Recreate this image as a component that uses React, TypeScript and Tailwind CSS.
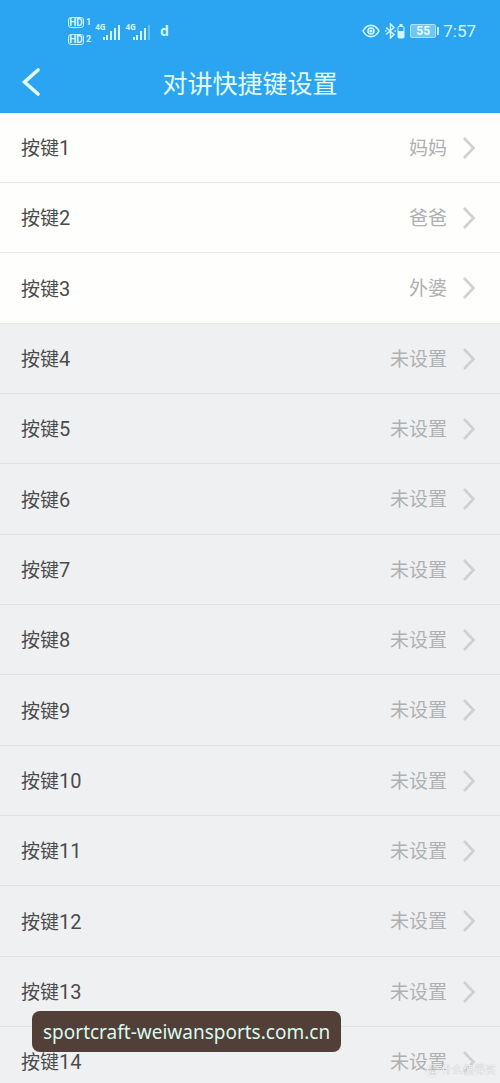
import React from 'react';

interface KeySlot {
  id: number;
  contact?: string;
}

const contacts = ['妈妈', '爸爸', '外婆'];

const slots: KeySlot[] = Array.from({ length: 14 }).map((_, idx) => ({
  id: idx + 1,
  contact: contacts[idx]
}));

function HdBadge({ sim }: { sim: string }) {
  return (
    <div className="flex items-center gap-0.5">
      <span className="flex h-[11px] w-4 items-center justify-center rounded-[3px] border border-[#c4f1fb] text-[10px] leading-none font-bold">
        HD
      </span>
      <span className="text-[9px] leading-none font-bold">{sim}</span>
    </div>
  );
}

function Signal({ weak }: { weak?: boolean }) {
  return (
    <div className="flex">
      <span className="-mr-1 font-['Open_Sans',sans-serif] text-[8px] leading-none font-bold">4G</span>
      <svg className="mt-px h-4 w-[18px]" viewBox="0 0 18 16" fill="currentColor" aria-hidden="true">
        <rect x="1" y="13" width="2" height="3" />
        <rect x="4" y="11" width="2" height="5" />
        <rect x="8" y="7" width="2" height="9" />
        <rect x="12" y="4" width="2" height="12" />
        <rect x="16" y="1" width="2" height="15" opacity={weak ? 0.35 : 1} />
      </svg>
    </div>
  );
}

function StatusBar() {
  return (
    <div className="flex h-[50px] items-center justify-between pt-3 pr-6 pl-[68px] text-[#d3f5fb]">
      <div className="flex items-center">
        <div className="flex flex-col gap-1.5">
          <HdBadge sim="1" />
          <HdBadge sim="2" />
        </div>
        <div className="ml-1 flex gap-1.5">
          <Signal />
          <Signal weak />
        </div>
        <span className="ml-2.5 font-['Noto_Sans',sans-serif] text-sm leading-5 font-bold">d</span>
      </div>
      <div className="flex items-center">
        <svg className="h-3.5 w-[18px]" viewBox="0 0 18 14" fill="none" stroke="currentColor" strokeWidth="1.6" aria-hidden="true">
          <path d="M1 7C3 3.2 5.8 1.4 9 1.4S15 3.2 17 7C15 10.8 12.2 12.6 9 12.6S3 10.8 1 7Z" />
          <circle cx="9" cy="7" r="3" />
          <circle cx="9" cy="7" r="0.8" fill="currentColor" />
        </svg>
        <svg className="ml-1 h-4 w-[22px]" viewBox="0 0 22 16" fill="none" stroke="currentColor" strokeWidth="1.5" aria-hidden="true">
          <path d="M2 4.5L10 11.5L6.5 15V1L10 4.5L2 11.5" />
          <path d="M1 8H2.5M10.5 8H12" />
          <rect x="14" y="3.5" width="6" height="11.5" rx="1" strokeWidth="1" />
          <rect x="15.5" y="1" width="3" height="2" fill="currentColor" stroke="none" />
          <rect x="14" y="8" width="6" height="7" fill="currentColor" stroke="none" />
        </svg>
        <div className="ml-1 flex items-center">
          <span className="flex h-3.5 w-[26px] items-center justify-center rounded-xs border border-[#a9e3fa] bg-[#72c6f6] text-xs leading-none font-bold text-[#e6fbfc]">
            55
          </span>
          <span className="ml-px h-2 w-0.5 bg-[#bcebfb]" />
        </div>
        <span className="ml-1 text-[17px] leading-5">7:57</span>
      </div>
    </div>
  );
}

function KeyRow({ id, contact }: KeySlot) {
  return (
    <li className={`h-[70px] border-b nth-[3n]:h-[71px] ${contact ? 'border-[#e7e9e9] bg-[#fefefc]' : 'border-[#dfe1e2] bg-[#eff0f2]'}`}>
      <button className="flex h-full w-full items-center pr-6 pl-[21px] text-[19px] leading-7">
        <span className="pt-0.5 text-[#4b4b4b]">
          按键<span className="text-xl leading-7">{id}</span>
        </span>
        <span className="ml-auto pt-0.5 text-[#afb0b1]">{contact ?? '未设置'}</span>
        <svg className="ml-4 h-6 w-[13px] text-[#cfd0d0]" viewBox="0 0 13 24" fill="none" stroke="currentColor" strokeWidth="2.6" aria-hidden="true">
          <path d="M1 2L10.5 12L1 22" />
        </svg>
      </button>
    </li>
  );
}

export default function App() {
  return (
    <div className="relative flex h-screen flex-col overflow-hidden bg-[#eff0f2] font-[Roboto,'Noto_Sans_CJK_SC',sans-serif]">
      <header className="shrink-0 bg-[#2ba5f2]">
        <StatusBar />
        <div className="grid h-[63px] grid-cols-[60px_1fr_60px] items-center text-[#e2fbfb]">
          <button className="flex h-full items-center pl-[21px]" aria-label="返回">
            <svg className="h-[30px] w-5" viewBox="0 0 20 30" fill="none" stroke="currentColor" strokeWidth="3.6" strokeLinecap="round" aria-hidden="true">
              <path d="M17 3L3.5 15L17 27" />
            </svg>
          </button>
          <h1 className="pt-1.5 text-center text-[25px] leading-9">对讲快捷键设置</h1>
        </div>
      </header>

      <ul className="min-h-0 flex-1 overflow-y-auto [scrollbar-width:none]">
        {slots.map((slot) => (
          <KeyRow key={slot.id} {...slot} />
        ))}
      </ul>

      <div className="pointer-events-none absolute bottom-[31px] left-8 rounded-lg bg-[#513f38] px-[11px] pt-[7px] pb-1.5 font-['Noto_Sans',sans-serif] text-[19px] leading-7 text-[#d8faee]">
        sportcraft-weiwansports.com.cn
      </div>

      <div className="pointer-events-none absolute right-1 bottom-1 flex items-center gap-0.5 text-[#fafafa]">
        <span className="flex h-3.5 w-3.5 items-center justify-center rounded-full border border-[#e2e3e3] text-[9px] leading-none text-[#cfd0d0]">
          值
        </span>
        <span className="text-[11px] leading-4 text-shadow-[0_0_1px_#8f8f8f]">什么值得买</span>
      </div>
    </div>
  );
}
